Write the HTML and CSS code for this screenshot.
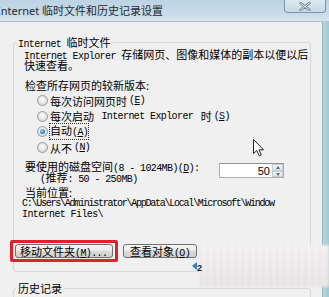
FILE: index.html
```html
<!DOCTYPE html>
<html lang="zh-CN">
<head>
  <meta charset="UTF-8">
  <meta name="viewport" content="width=device-width, initial-scale=1.0">
  <title>Internet 临时文件和历史记录设置</title>
  <link rel="stylesheet" href="styles.css">
</head>
<body>
  <div class="window">
    <div class="titlebar">
      <span class="title">Internet 临时文件和历史记录设置</span>
      <span class="close">
        <svg width="12" height="9" viewBox="0 0 12 9">
          <path d="M1.5 1 L10.5 8 M10.5 1 L1.5 8" stroke="#6f7f8a" stroke-width="2.4" stroke-linecap="round"/>
          <path d="M1.5 1 L10.5 8 M10.5 1 L1.5 8" stroke="#eef3f6" stroke-width="1" stroke-linecap="round"/>
        </svg>
      </span>
    </div>

    <div class="main">
      <div class="client">
        <fieldset class="group">
          <legend><span class="en">Internet </span>临时文件</legend>

          <div class="desc">
            <div class="line"><span class="en">Internet Explorer </span>存储网页、图像和媒体的副本以便以后</div>
            <div class="line">快速查看。</div>
          </div>

          <div class="label check">检查所存网页的较新版本:</div>
          <ul class="radios">
            <li><span class="radio"></span>每次访问网页时<span class="en">(<u>E</u>)</span></li>
            <li><span class="radio"></span>每次启动<span class="en"> Internet Explorer </span>时<span class="en">(<u>S</u>)</span></li>
            <li><span class="radio checked"></span><span class="focus">自动<span class="en">(<u>A</u>)</span></span></li>
            <li><span class="radio"></span>从不<span class="en">(<u>N</u>)</span></li>
          </ul>

          <div class="disk">
            <div class="disk-label">
              <div class="dline">要使用的磁盘空间<span class="en">(8 - 1024MB)(<u>D</u>):</span></div>
              <div class="dline indent"><span class="en">(</span>推荐<span class="en">: 50 - 250MB)</span></div>
            </div>
            <div class="spin">
              <span class="spin-val">50</span>
              <span class="spin-btns">
                <span class="spin-btn"><i class="up"></i></span>
                <span class="spin-btn"><i class="down"></i></span>
              </span>
            </div>
          </div>

          <div class="label place">当前位置:</div>
          <div class="path">
            <div class="line tight">C:\Users\Administrator\AppData\Local\Microsoft\Window</div>
            <div class="line">Internet Files\</div>
          </div>

          <div class="buttons">
            <span class="highlight">
              <button class="btn btn-move">移动文件夹<span class="en">(<u>M</u>)...</span></button>
            </span>
            <button class="btn btn-view">查看对象<span class="en">(<u>O</u>)</span></button>
          </div>
        </fieldset>

        <fieldset class="group history">
          <legend>历史记录</legend>
        </fieldset>
      </div>
      <div class="frame-right"></div>
    </div>

    <div class="smudge"></div>
    <div class="mark"><span class="mark-arrow"></span>2</div>

    <svg class="cursor" width="12" height="18" viewBox="0 0 12 18">
      <path d="M0.5 0.5 L0.5 14.5 L3.8 11.5 L6.2 16.8 L8.3 15.9 L6 10.8 L10.5 10.8 Z" fill="#fff" stroke="#222" stroke-width="1" stroke-linejoin="round"/>
    </svg>
  </div>
</body>
</html>
```

FILE: styles.css
```css
body {
  margin: 0;
  width: 329px;
  height: 297px;
  overflow: hidden;
  font-family: "Noto Sans CJK SC", sans-serif;
  font-size: 11px;
  color: #000;
  background-color: #f0f0f0;
}

.window {
  position: relative;
  height: 297px;
  display: flex;
  flex-direction: column;
}

/* title bar */
.titlebar {
  height: 21px;
  flex-shrink: 0;
  display: flex;
  align-items: flex-start;
  background: linear-gradient(#bcd3e4, #c9dcea 70%, #d8e6ef);
}

.title {
  font-family: "Noto Sans", "Noto Sans CJK SC", sans-serif;
  font-size: 11px;
  line-height: 19px;
  padding-top: 1px;
  margin-left: -3px;
  color: #1f2b34;
  white-space: nowrap;
}

.close {
  margin-left: auto;
  margin-right: 3px;
  width: 42px;
  height: 13px;
  box-sizing: border-box;
  border: 1px solid #7d95a7;
  border-top: none;
  border-radius: 0 0 4px 4px;
  background: linear-gradient(#dde9f1, #c6d9e6);
  display: flex;
  align-items: center;
  justify-content: center;
}

.main {
  flex: 1;
  display: flex;
  min-height: 0;
}

.client {
  width: 323px;
  flex-shrink: 0;
  box-sizing: border-box;
  padding-top: 14px;
  border-top: 1px solid #a9bccb;
  border-right: 1px solid #9db4c1;
  background-color: #f0f0f0;
}

.frame-right {
  flex: 1;
  background: linear-gradient(90deg, #b7d7de, #9fc9d2);
}

/* group boxes */
.group {
  margin: 0 0 0 13px;
  width: 298px;
  box-sizing: border-box;
  min-width: 0;
  padding: 1px 10px 9px 10px;
  border: 1px solid #d2dadf;
  border-radius: 3px;
}

.group legend {
  height: 12px;
  margin-left: -8px;
  padding: 0 2px;
  line-height: 12px;
  white-space: nowrap;
}

.history {
  margin-top: 10px;
  height: 30px;
}

.en {
  font-family: "Liberation Mono", monospace;
  font-size: 10px;
  letter-spacing: -0.6px;
}

.line {
  height: 11px;
  line-height: 11px;
  white-space: nowrap;
}

.label {
  height: 12px;
  line-height: 12px;
  margin-left: 1px;
}

.check {
  margin-top: 8px;
}

/* radio buttons */
.radios {
  list-style: none;
  margin: 2px 0 0 13px;
  padding: 0;
}

.radios li {
  height: 15.6px;
  display: flex;
  align-items: center;
  gap: 2px;
  white-space: pre;
}

.radio {
  width: 11px;
  height: 11px;
  box-sizing: border-box;
  border: 1px solid #9a9a9a;
  border-radius: 50%;
  background: radial-gradient(circle at 50% 40%, #ffffff, #e2e2e2 55%, #cfcfcf);
  display: flex;
  align-items: center;
  justify-content: center;
}

.radio.checked::after {
  content: "";
  width: 5px;
  height: 5px;
  border-radius: 50%;
  background: radial-gradient(circle at 40% 35%, #9fd0f5, #2a6fc4 70%, #1b4f9a);
}

.focus {
  outline: 1px dotted #333;
  outline-offset: 0;
  line-height: 12px;
}

/* disk space */
.disk {
  display: flex;
  margin-top: 6px;
  margin-left: 1px;
}

.disk-label {
  width: 194px;
}

.dline {
  height: 10.5px;
  line-height: 10.5px;
  white-space: nowrap;
}

.indent {
  padding-left: 15px;
}

.spin {
  margin-top: 2px;
  width: 65px;
  height: 15px;
  box-sizing: border-box;
  border: 1px solid #abadb3;
  border-top-color: #8f9296;
  background-color: #fff;
  display: flex;
  align-items: center;
  justify-content: flex-end;
}

.spin-val {
  font-family: "Liberation Sans", sans-serif;
  font-size: 11px;
  margin-right: 2px;
}

.spin-btns {
  width: 11px;
  height: 13px;
  display: flex;
  flex-direction: column;
}

.spin-btn {
  flex: 1;
  border: 1px solid #c5ccd2;
  background: linear-gradient(#f1f4f6, #dde3e8);
  display: flex;
  align-items: center;
  justify-content: center;
}

.spin-btn i {
  width: 0;
  height: 0;
  border-left: 2.5px solid transparent;
  border-right: 2.5px solid transparent;
}

.spin-btn .up {
  border-bottom: 3px solid #5d6b78;
}

.spin-btn .down {
  border-top: 3px solid #5d6b78;
}

.place {
  margin-top: 4px;
}

.path {
  margin-left: -2px;
  font-family: "Liberation Mono", monospace;
  font-size: 10px;
  letter-spacing: -0.6px;
}

.path .tight {
  letter-spacing: -1.25px;
}

/* buttons */
.buttons {
  display: flex;
  align-items: center;
  margin-top: 20px;
  margin-left: -14px;
}

.highlight {
  display: flex;
  padding: 1px 2px;
  border: 3px solid #d8262c;
  border-radius: 2px;
}

.btn {
  height: 14px;
  padding: 0;
  font-family: "Noto Sans CJK SC", sans-serif;
  font-size: 11px;
  line-height: 12px;
  color: #000;
  border: 1px solid #707070;
  border-radius: 3px;
  background: linear-gradient(#f4f4f4, #ebebeb 45%, #dcdcdc 50%, #cfcfcf);
  white-space: nowrap;
}

.btn-move {
  width: 98px;
  text-align: left;
  padding-left: 4px;
}

.btn-view {
  width: 74px;
  margin-left: 5px;
}

/* overlays */
.smudge {
  position: absolute;
  left: 200px;
  top: 245px;
  width: 129px;
  height: 42px;
  background:
    repeating-linear-gradient(90deg, rgba(220, 130, 130, 0.16) 0 1px, transparent 1px 7px),
    repeating-linear-gradient(0deg, rgba(170, 170, 170, 0.14) 0 1px, transparent 1px 4px),
    linear-gradient(#f6f5f5, #ebe9e9);
  filter: blur(0.8px);
}

.mark {
  position: absolute;
  left: 192px;
  top: 262px;
  font-family: "Liberation Sans", sans-serif;
  font-size: 9px;
  line-height: 10px;
  font-weight: bold;
  color: #222;
  display: flex;
  align-items: flex-end;
}

.mark-arrow {
  width: 0;
  height: 0;
  border-top: 4px solid transparent;
  border-bottom: 4px solid transparent;
  border-right: 5px solid #2d7fc8;
  margin-bottom: 3px;
}

.cursor {
  position: absolute;
  left: 253px;
  top: 139px;
}
```
